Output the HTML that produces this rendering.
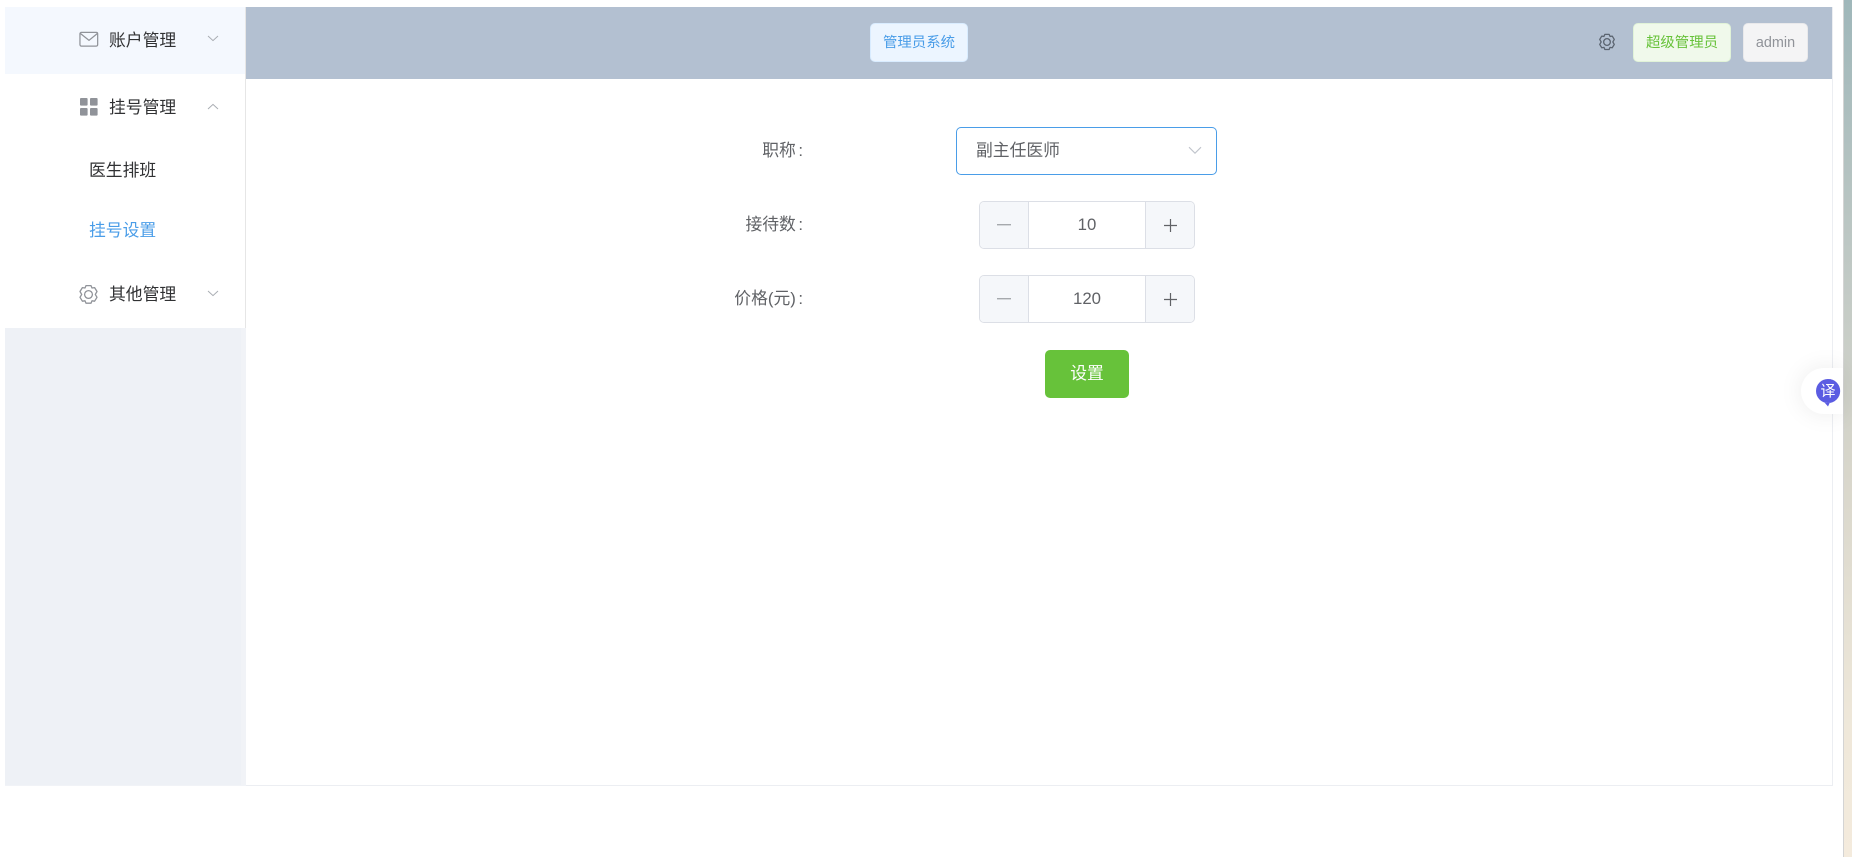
<!DOCTYPE html>
<html lang="zh">
<head>
<meta charset="utf-8">
<title>管理员系统</title>
<style>
html,body{margin:0;padding:0;width:1852px;height:857px;overflow:hidden;background:#fff;font-family:"Liberation Sans","Noto Sans CJK SC",sans-serif;}
.a{position:absolute;box-sizing:border-box;}
.t{position:absolute;white-space:nowrap;line-height:24px;height:24px;}
.m{font-size:16.8px;color:#303133;}
.f{font-size:16.8px;color:#606266;text-align:right;width:200px;left:603px;}
.f span{margin-left:2.5px;}
.tag{position:absolute;top:23px;height:39px;line-height:39px;font-size:14.4px;text-align:center;border-radius:5px;box-sizing:border-box;border:1px solid;}
.num{position:absolute;left:979px;width:216px;height:48px;border:1px solid #dcdfe6;border-radius:5px;background:#fff;box-sizing:border-box;font-size:16.8px;color:#606266;text-align:center;line-height:45px;}
.btnl,.btnr{position:absolute;top:0;width:48px;height:46px;background:#f5f7fa;}
.btnl{left:0;border-right:1px solid #dcdfe6;border-radius:4px 0 0 4px;}
.btnr{right:0;border-left:1px solid #dcdfe6;border-radius:0 4px 4px 0;}
svg{position:absolute;display:block;}
</style>
</head>
<body>
<!-- right strip -->
<div class="a" style="left:1843px;top:0;width:9px;height:857px;border-left:1px solid #d4d4d4;background:linear-gradient(180deg,#9fb7ba 0%,#c4cbc6 35%,#d8d6cb 55%,#efe8da 85%,#f4ebdd 100%);"></div>

<!-- outer frame -->
<div class="a" style="left:5px;top:7px;width:1828px;height:779px;border:1px solid #eceef2;border-top:none;background:#fff;"></div>

<!-- sidebar -->
<div class="a" style="left:5px;top:7px;width:241px;height:779px;background:#f1f3f7;"></div>
<div class="a" style="left:5px;top:328px;width:236px;height:457px;background:#eef1f6;"></div>
<div class="a" style="left:5px;top:7px;width:241px;height:321px;background:#fff;border-right:1px solid #e6e6e6;"></div>
<div class="a" style="left:5px;top:7px;width:240px;height:67px;background:#f4f8fe;"></div>

<!-- menu item 1 -->
<svg style="left:79px;top:31px" width="20" height="17" viewBox="0 0 21 17" fill="none" stroke="#909399" stroke-width="1.3"><rect x="1" y="1" width="18.6" height="14.4" rx="1.5"/><path d="M1.5 2.2l9 7.2 8.8-7.2"/></svg>
<div class="t m" style="left:109px;top:29px">账户管理</div>
<svg style="left:207px;top:35px" width="12" height="7" viewBox="0 0 12 7" fill="none" stroke="#a9adb3" stroke-width="1"><path d="M1 1l5 4.6L11 1"/></svg>

<!-- menu item 2 -->
<svg style="left:80px;top:98px" width="18" height="18" viewBox="0 0 18 18" fill="#909399"><rect x="0" y="0" width="7.6" height="7.6" rx="1"/><rect x="10" y="0" width="7.6" height="7.6" rx="1"/><rect x="0" y="10" width="7.6" height="7.6" rx="1"/><rect x="10" y="10" width="7.6" height="7.6" rx="1"/></svg>
<div class="t m" style="left:109px;top:96px">挂号管理</div>
<svg style="left:207px;top:103px" width="12" height="7" viewBox="0 0 12 7" fill="none" stroke="#a9adb3" stroke-width="1"><path d="M1 6l5-4.6L11 6"/></svg>

<div class="t m" style="left:89px;top:159px">医生排班</div>
<div class="t m" style="left:89px;top:219px;color:#4a9de8">挂号设置</div>

<!-- menu item 3 -->
<svg style="left:78px;top:284px" width="21" height="21" viewBox="0 0 21 21" fill="none" stroke="#909399" stroke-width="1.3"><path d="M8 1.6h5l1 2.4 2.6-.4 2.4 3.9-1.7 2.9 1.7 2.9-2.4 3.9-2.6-.4-1 2.4H8l-1-2.4-2.6.4-2.4-3.9 1.7-2.9L2 7.5l2.4-3.9L7 4z" stroke-linejoin="round"/><circle cx="10.5" cy="10.5" r="3.9"/></svg>
<div class="t m" style="left:109px;top:283px">其他管理</div>
<svg style="left:207px;top:290px" width="12" height="7" viewBox="0 0 12 7" fill="none" stroke="#a9adb3" stroke-width="1"><path d="M1 1l5 4.6L11 1"/></svg>

<!-- header -->
<div class="a" style="left:246px;top:7px;width:1586px;height:72px;background:#b3c0d1;"></div>
<div class="tag" style="left:870px;width:98px;background:#ecf5ff;border-color:#d9ecff;color:#4a9de8;">管理员系统</div>
<svg style="left:1598px;top:33px" width="18" height="18" viewBox="0 0 21 21" fill="none" stroke="#5b6470" stroke-width="1.5"><path d="M8 1.6h5l1 2.4 2.6-.4 2.4 3.9-1.7 2.9 1.7 2.9-2.4 3.9-2.6-.4-1 2.4H8l-1-2.4-2.6.4-2.4-3.9 1.7-2.9L2 7.5l2.4-3.9L7 4z" stroke-linejoin="round"/><circle cx="10.5" cy="10.5" r="3.9"/></svg>
<div class="tag" style="left:1633px;width:98px;background:#f0f9eb;border-color:#e1f3d8;color:#67c23a;">超级管理员</div>
<div class="tag" style="left:1743px;width:65px;background:#f4f4f5;border-color:#e9e9eb;color:#909399;">admin</div>

<!-- form -->
<div class="t f" style="top:139px">职称<span>:</span></div>
<div class="a" style="left:956px;top:127px;width:261px;height:48px;border:1px solid #4a9de8;border-radius:5px;background:#fff;"></div>
<div class="t" style="left:976px;top:139px;font-size:16.8px;color:#606266;">副主任医师</div>
<svg style="left:1188px;top:146px" width="14" height="9" viewBox="0 0 14 9" fill="none" stroke="#c0c4cc" stroke-width="1.1"><path d="M1 1.2l6 6 6-6"/></svg>

<div class="t f" style="top:213px">接待数<span>:</span></div>
<div class="num" style="top:201px">10
  <div class="btnl"><svg style="left:17px;top:22px" width="14" height="2"><rect width="14" height="1.4" fill="#a6a9ad"/></svg></div>
  <div class="btnr"><svg style="left:18px;top:17px" width="13" height="13" viewBox="0 0 13 13" stroke="#606266" stroke-width="1.2"><path d="M0 6.5h13M6.5 0v13"/></svg></div>
</div>

<div class="t f" style="top:287px">价格(元)<span>:</span></div>
<div class="num" style="top:275px">120
  <div class="btnl"><svg style="left:17px;top:22px" width="14" height="2"><rect width="14" height="1.4" fill="#a6a9ad"/></svg></div>
  <div class="btnr"><svg style="left:18px;top:17px" width="13" height="13" viewBox="0 0 13 13" stroke="#606266" stroke-width="1.2"><path d="M0 6.5h13M6.5 0v13"/></svg></div>
</div>

<div class="a" style="left:1045px;top:350px;width:84px;height:48px;border-radius:5px;background:#67c23a;color:#fff;font-size:16.8px;text-align:center;line-height:48px;">设置</div>

<!-- translate widget -->
<div class="a" style="left:1801px;top:368px;width:42px;height:46px;background:#fff;border-radius:23px 0 0 23px;box-shadow:0 0 24px rgba(0,0,0,.08);"></div>
<svg style="left:1815px;top:378px" width="26" height="30" viewBox="0 0 26 30"><path d="M13 1a12 12 0 1 1-3.6 23.4L13 28.5l2-4.3A12 12 0 0 0 13 1z" fill="#5b5ce2"/><circle cx="13" cy="13" r="12" fill="#5b5ce2"/></svg>
<div class="t" style="left:1820px;top:380px;font-size:15px;color:#fff;width:16px;text-align:center;">译</div>
</body>
</html>
